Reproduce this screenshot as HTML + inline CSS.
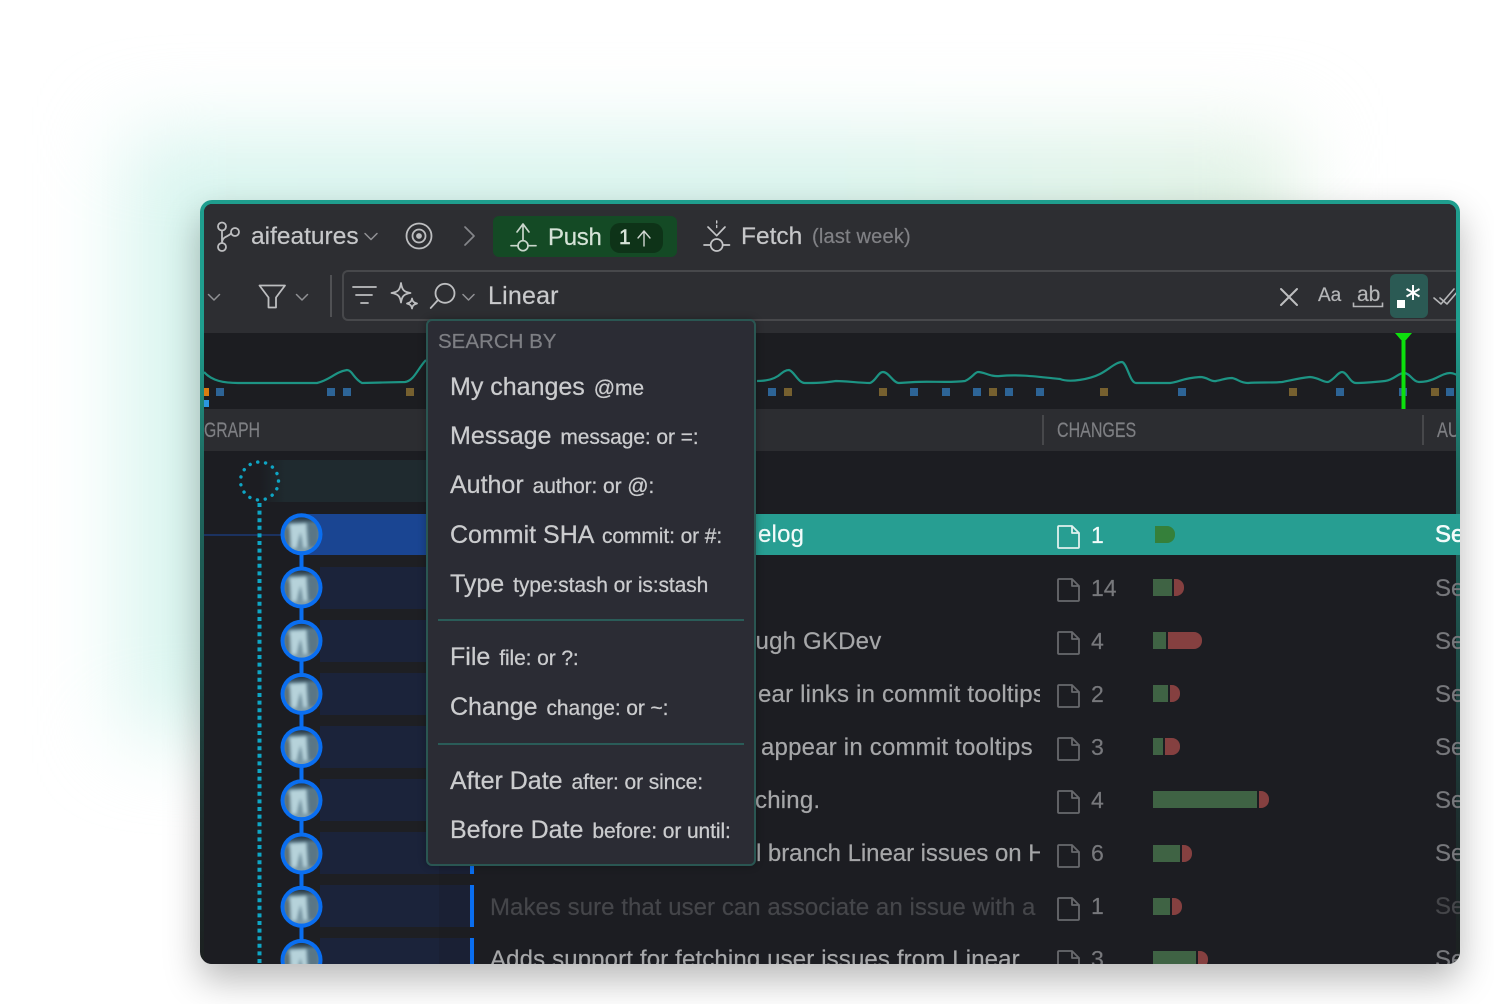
<!DOCTYPE html>
<html><head><meta charset="utf-8"><style>
html,body{margin:0;padding:0;background:#fff}
body{width:1494px;height:1004px;position:relative;overflow:hidden;font-family:"Liberation Sans",sans-serif}
.glow{position:absolute;left:125px;top:135px;width:1170px;height:600px;background:linear-gradient(90deg,#d8f5ef,#d8f3ec 60%,#e0f1e3);filter:blur(42px)}
.win{position:absolute;left:200px;top:200px;width:1260px;height:764px;border-radius:12px;overflow:hidden;background:linear-gradient(180deg,#1f9e8e 0,#1f9e8e 130px,#1f6e64 260px,#1d2f2f 620px,#1c2020 764px);box-shadow:0 16px 36px rgba(0,0,0,.28)}
.wrapb{position:absolute;left:0;top:0;width:1260px;height:764px;filter:blur(.3px)}
.in{position:absolute;left:4px;top:4px;width:1252px;height:760px;background:#1c1d22;border-radius:8px 8px 0 0;overflow:hidden}
.a{position:absolute}
.t{position:absolute;white-space:nowrap;line-height:40px;height:40px;-webkit-text-stroke:.2px}
svg{position:absolute;left:0;top:0;overflow:visible}
.m{font-size:24px;color:#a6a7a9;letter-spacing:.2px}
.n{font-size:23px;color:#77787c}
.s{font-size:24px;color:#77787c;left:1235px}
.g{position:absolute;left:949px;height:17px;background:#3f6344}
.r{position:absolute;height:17px;background:#854040;border-radius:0 8px 8px 0}
.pt{position:absolute;left:23px;white-space:nowrap;line-height:40px;height:40px;font-size:25px;color:#cbccce;-webkit-text-stroke:.25px}
.pt span{font-size:21px;margin-left:2px;letter-spacing:-.1px}
.row{position:absolute;left:116px;width:150px;height:42px;background:#1b233a}
</style></head><body>
<div class="glow"></div>
<div class="win"><div class="wrapb"><div class="in">
<!-- toolbar -->
<div class="a" style="left:0;top:0;width:1252px;height:129px;background:#2d2e32"></div>
<svg width="1252" height="129" fill="none" stroke="#bdbec0" stroke-width="1.8" stroke-linecap="round" stroke-linejoin="round">
<g transform="translate(-204,-204)"><circle cx="222" cy="226.500" r="4"/><circle cx="222" cy="247" r="4"/><circle cx="235" cy="232" r="4"/><path d="M222 230.500V243M231 233.500C228 237 223 236 222 242"/></g>
<path d="M161 29.500l6 6 6-6" stroke="#909194" stroke-width="1.5"/>
<circle cx="215" cy="32" r="12.500"/><circle cx="215" cy="32" r="6.500"/><circle cx="215" cy="32" r="2" fill="#bdbec0"/>
<path d="M261 23l9 9-9 9" stroke="#85868a" stroke-width="1.7"/>
</svg>
<div class="a" style="left:289px;top:12px;width:184px;height:41px;background:#144a25;border-radius:6px"></div>
<div class="a" style="left:406px;top:19px;width:53px;height:30px;background:#0e3318;border-radius:10px"></div>
<svg width="1252" height="129" fill="none" stroke="#c9d6cb" stroke-width="1.7" stroke-linecap="round" stroke-linejoin="round">
<path d="M319 36V20M313 28l6-8 6 8M307 41.700h7M324 41.700h8"/><circle cx="319" cy="41.700" r="5"/>
<path d="M440 42V27M434 34l6-7 6 7" stroke="#d0d6d1" stroke-width="1.4"/>
<g stroke="#c4c5c7"><path d="M512.700 17v9" stroke-dasharray="2 2.500" stroke-width="1.400"/><path d="M504 23l8.700 8.700L521 23"/><circle cx="512.700" cy="41" r="6"/><path d="M500 41h6.500M519 41h6.500"/></g>
</svg>
<div class="t" style="left:47px;top:13px;font-size:24.5px;color:#c6c7c9">aifeatures</div>
<div class="t" style="left:344px;top:14px;font-size:24px;color:#d5e3d7;letter-spacing:-.3px">Push</div>
<div class="t" style="left:415px;top:14px;font-size:21px;color:#d5e3d7;-webkit-text-stroke:.5px">1</div>
<div class="t" style="left:537px;top:13px;font-size:24.5px;color:#c6c7c9">Fetch</div>
<div class="t" style="left:608px;top:13px;font-size:20px;color:#808185;letter-spacing:.2px">(last week)</div>
<!-- search row -->
<div class="a" style="box-sizing:border-box;left:138px;top:66px;width:1120px;height:51px;border:2px solid #47484b;border-right:none;border-radius:6px 0 0 6px"></div>
<div class="a" style="left:126px;top:71px;width:2px;height:42px;background:#505154"></div>
<svg width="1252" height="129" fill="none" stroke="#bdbec0" stroke-width="1.8" stroke-linecap="round" stroke-linejoin="round">
<path d="M4.500 90.500l5.500 5.500 5.500-5.500M92.500 90.500l5.500 5.500 5.500-5.500M259 90.500l5.500 5.500 5.500-5.500" stroke="#909194" stroke-width="1.5"/>
<path d="M55.500 81.500h25.500l-9 12v10h-7.500v-10z"/>
<path d="M149 83h23M152 91h16M157 99h7"/>
<path d="M197 79c1 7 3 9 9.500 10-6.500 1-8.500 3-9.500 9.500-1-6.500-3-8.500-9.500-9.500 6.500-1 8.500-3 9.500-10z"/><path d="M208 94.500c.5 3 1.500 4 5 5-3.500 1-4.500 2-5 5-.5-3-1.500-4-5-5 3.500-1 4.500-2 5-5z"/>
<circle cx="241" cy="89.300" r="9.500"/><path d="M234 96l-7.300 8"/>
<path d="M1077 85l16 16M1093 85l-16 16" stroke-width="2"/>
</svg>
<div class="t" style="left:284px;top:72px;font-size:25px;color:#c9cacc;letter-spacing:.2px">Linear</div>
<div class="t" style="left:1114px;top:72px;font-size:19px;color:#b5b6b8">Aa</div>
<div class="t" style="left:1153px;top:71px;font-size:21px;color:#b5b6b8">ab</div>
<svg width="1252" height="129" fill="none" stroke="#b5b6b8" stroke-width="1.600"><path d="M1149.500 98.500v4h29v-4"/></svg>
<div class="a" style="left:1186px;top:70px;width:38px;height:44px;background:#2b5a54;border-radius:6px"></div>
<div class="a" style="left:1193px;top:96px;width:8px;height:8px;background:#fff"></div>
<svg width="1252" height="129" fill="none" stroke="#fff" stroke-width="2"><path d="M1209 81v15M1202.500 85l13 7.500M1215.500 85l-13 7.500"/></svg>
<svg width="1252" height="129" fill="none" stroke="#b5b6b8" stroke-width="1.600" stroke-linecap="round" stroke-linejoin="round"><path d="M1230 94l7 6 13-15M1236 94l7 6 11-13"/></svg>
<!-- chart -->
<div class="a" style="left:0;top:129px;width:1252px;height:76px;background:#1c1d21"></div>
<svg width="1252" height="210" fill="none">
<g transform="translate(-204,-204)">
<path stroke="#1d9484" stroke-width="2.200" stroke-linejoin="round" d="M204 372C212 381 224 383 238 383L317 383C330 380 335 372 347 370C352 370 354 379 362 383L405 382C414 381 418 368 426 360M757 381C765 381 772 380 778 376C782 373 785 370 789 370C794 371 798 383 805 383C815 383 822 383 836 381C845 381 860 383 870 383C876 381 878 372 883 372C889 372 893 383 899 383L915 382C930 381 950 383 965 381C972 378 975 372 978 372C985 372 990 377 1000 376C1020 374 1040 377 1060 379C1070 383 1090 379 1100 374C1108 370 1116 362 1122 362C1127 363 1130 383 1136 383L1170 383C1180 382 1182 378 1200 377C1208 377 1210 382 1216 381C1222 380 1226 378 1232 378C1238 379 1240 383 1248 383C1258 382 1272 383 1282 382C1292 380 1300 378 1310 377C1320 378 1322 382 1328 382C1334 380 1338 372 1342 372C1347 372 1350 383 1356 383C1365 383 1375 382 1385 381C1394 380 1398 373 1404 373C1410 373 1413 382 1419 382C1426 382 1432 380 1436 378C1442 375 1446 373 1450 373C1453 373 1455 374 1457 375"/>
<path fill="#2d6496" d="M216 388h8v8h-8zM327 388h8v8h-8zM343 388h8v8h-8zM768 388h8v8h-8zM910 388h8v8h-8zM942 388h8v8h-8zM973 388h8v8h-8zM1005 388h8v8h-8zM1036 388h8v8h-8zM1178 388h8v8h-8zM1336 388h8v8h-8zM1399 388h8v8h-8zM1446 388h8v8h-8z"/>
<path fill="#76602f" d="M406 388h8v8h-8zM784 388h8v8h-8zM879 388h8v8h-8zM989 388h8v8h-8zM1100 388h8v8h-8zM1289 388h8v8h-8zM1431 388h8v8h-8z"/>
<path fill="#d87c10" d="M203 388h6v8h-6z"/><path fill="#2b96e0" d="M203 400h6v7h-6z"/>
<path fill="#0de00d" d="M1401.500 333h4v76h-4zM1395 333h17l-6 7h-5z"/>
</g></svg>
<!-- header -->
<div class="a" style="left:0;top:205px;width:1252px;height:42px;background:#2c2d31"></div>
<div class="a" style="left:838px;top:211px;width:2px;height:30px;background:#47484b"></div>
<div class="a" style="left:1218px;top:211px;width:2px;height:30px;background:#47484b"></div>
<div class="t" style="left:0;top:207px;font-size:21px;color:#7e7f83;transform:scaleX(.75);transform-origin:left">GRAPH</div>
<div class="t" style="left:853px;top:207px;font-size:21px;color:#7e7f83;transform:scaleX(.763);transform-origin:left">CHANGES</div>
<div class="t" style="left:1233px;top:207px;font-size:21px;color:#7e7f83;transform:scaleX(.78);transform-origin:left">AU</div>
<!-- graph column -->
<div class="a" style="left:56px;top:256px;width:400px;height:42px;background:linear-gradient(90deg,#1c1d22,#1f2a2f 25px)"></div>
<div class="a" style="left:106px;top:310px;width:160px;height:450px;background:#1e1f23"></div>
<div class="a" style="left:96px;top:310px;width:370px;height:41px;background:#1a4592"></div>
<div class="a" style="left:0;top:330px;width:78px;height:2px;background:#1b3260"></div>
<div class="row" style="top:363px"></div><div class="row" style="top:416px"></div><div class="row" style="top:469px"></div><div class="row" style="top:522px"></div><div class="row" style="top:575px"></div><div class="row" style="top:628px"></div><div class="row" style="top:681px"></div><div class="row" style="top:734px"></div>
<div class="a" style="left:235px;top:363px;width:31px;height:397px;background:rgba(20,20,25,.18)"></div>
<div class="a" style="left:266px;top:628px;width:4px;height:42px;background:#0a6ef0"></div>
<div class="a" style="left:266px;top:681px;width:4px;height:42px;background:#0a6ef0"></div>
<div class="a" style="left:266px;top:734px;width:4px;height:30px;background:#0a6ef0"></div>
<svg width="1252" height="760" fill="none" style="height:760px">
<defs><clipPath id="c"><circle r="17"/></clipPath>
<linearGradient id="av" x1="0" y1="0" x2="0" y2="1"><stop offset="0" stop-color="#25343f"/><stop offset=".22" stop-color="#5f7f8f"/><stop offset="1" stop-color="#7f9ca8"/></linearGradient>
<symbol id="u" overflow="visible"><circle r="21" fill="#0a6ef0"/><g clip-path="url(#c)"><rect x="-17" y="-17" width="34" height="34" fill="url(#av)"/><g style="filter:blur(1.5px)"><path d="M-12-10L5-11 6 13 2 14-1-2-5 14-10 14z" fill="#b6d2da"/><path d="M6-11h11v24H7z" fill="#5a7685"/><path d="M-17-6h5v22h-5z" fill="#5c6f75"/></g></g></symbol></defs>
<circle cx="55.500" cy="277" r="19" stroke="#0ea5c4" stroke-width="3.400" stroke-linecap="round" stroke-dasharray=".1 7.860"/>
<path stroke="#0ea5c4" stroke-width="4" stroke-dasharray="4 3.600" d="M55.500 299V760"/>
<path stroke="#0a6ef0" stroke-width="4" d="M97.500 330V760"/>
<use href="#u" x="97.500" y="330.300"/><use href="#u" x="97.500" y="383.500"/><use href="#u" x="97.500" y="436.700"/><use href="#u" x="97.500" y="489.900"/><use href="#u" x="97.500" y="543.100"/><use href="#u" x="97.500" y="596.300"/><use href="#u" x="97.500" y="649.500"/><use href="#u" x="97.500" y="702.700"/><use href="#u" x="97.500" y="755.900"/></svg>
<!-- rows -->
<div class="a" style="left:470px;top:310px;width:782px;height:41px;background:#279e92"></div>
<div class="t m" style="left:554px;top:311px;color:#f2fbfa">elog</div>
<div class="t m" style="left:538px;top:418px">ough GKDev</div>
<div class="a" style="left:470px;top:471px;width:366px;height:40px;overflow:hidden"><div class="t m" style="left:84px;top:0">ear links in commit tooltips</div></div>
<div class="t m" style="left:557px;top:524px">appear in commit tooltips</div>
<div class="t m" style="left:551px;top:577px">ching.</div>
<div class="a" style="left:470px;top:630px;width:366px;height:40px;overflow:hidden"><div class="t m" style="left:82px;top:0;letter-spacing:-.05px">l branch Linear issues on Hub</div></div>
<div class="a" style="left:286px;top:684px;width:550px;height:40px;overflow:hidden"><div class="t m" style="left:0;top:0;color:#45464a;letter-spacing:.05px">Makes sure that user can associate an issue with a Linear</div></div>
<div class="t m" style="left:286px;top:736px;letter-spacing:.14px">Adds support for fetching user issues from Linear</div>
<!-- file icons -->
<svg width="1252" height="760" style="height:760px" fill="none" stroke="#68696d" stroke-width="1.800" stroke-linejoin="round">
<path stroke="#dff1ee" d="M855 322h13l7 7v14a1 1 0 0 1-1 1h-19a1 1 0 0 1-1-1v-20a1 1 0 0 1 1-1zM868 322v7h7"/>
<path d="M855 375h13l7 7v14a1 1 0 0 1-1 1h-19a1 1 0 0 1-1-1v-20a1 1 0 0 1 1-1zM868 375v7h7"/>
<path d="M855 428h13l7 7v14a1 1 0 0 1-1 1h-19a1 1 0 0 1-1-1v-20a1 1 0 0 1 1-1zM868 428v7h7"/>
<path d="M855 481h13l7 7v14a1 1 0 0 1-1 1h-19a1 1 0 0 1-1-1v-20a1 1 0 0 1 1-1zM868 481v7h7"/>
<path d="M855 534h13l7 7v14a1 1 0 0 1-1 1h-19a1 1 0 0 1-1-1v-20a1 1 0 0 1 1-1zM868 534v7h7"/>
<path d="M855 587h13l7 7v14a1 1 0 0 1-1 1h-19a1 1 0 0 1-1-1v-20a1 1 0 0 1 1-1zM868 587v7h7"/>
<path d="M855 641h13l7 7v14a1 1 0 0 1-1 1h-19a1 1 0 0 1-1-1v-20a1 1 0 0 1 1-1zM868 641v7h7"/>
<path d="M855 694h13l7 7v14a1 1 0 0 1-1 1h-19a1 1 0 0 1-1-1v-20a1 1 0 0 1 1-1zM868 694v7h7"/>
<path d="M855 747h13l7 7v14a1 1 0 0 1-1 1h-19a1 1 0 0 1-1-1v-20a1 1 0 0 1 1-1zM868 747v7h7"/>
</svg>
<div class="t n" style="left:887px;top:311px;color:#f2fbfa">1</div>
<div class="t n" style="left:887px;top:364px">14</div>
<div class="t n" style="left:887px;top:417px">4</div>
<div class="t n" style="left:887px;top:470px">2</div>
<div class="t n" style="left:887px;top:523px">3</div>
<div class="t n" style="left:887px;top:576px">4</div>
<div class="t n" style="left:887px;top:629px">6</div>
<div class="t n" style="left:887px;top:682px">1</div>
<div class="t n" style="left:887px;top:735px">3</div>
<!-- bars -->
<div class="a" style="left:951px;top:322px;width:20px;height:17px;background:#35803a;border-radius:0 8px 8px 0"></div>
<div class="g" style="top:375px;width:19px"></div><div class="r" style="top:375px;left:970px;width:10px"></div>
<div class="g" style="top:428px;width:13px"></div><div class="r" style="top:428px;left:964px;width:34px"></div>
<div class="g" style="top:481px;width:15px"></div><div class="r" style="top:481px;left:966px;width:10px"></div>
<div class="g" style="top:534px;width:10px"></div><div class="r" style="top:534px;left:961px;width:15px"></div>
<div class="g" style="top:587px;width:104px"></div><div class="r" style="top:587px;left:1055px;width:10px"></div>
<div class="g" style="top:641px;width:27px"></div><div class="r" style="top:641px;left:978px;width:10px"></div>
<div class="g" style="top:694px;width:17px"></div><div class="r" style="top:694px;left:968px;width:10px"></div>
<div class="g" style="top:747px;width:43px"></div><div class="r" style="top:747px;left:994px;width:10px"></div>
<!-- popup -->
<div class="a" style="left:222px;top:115px;width:330px;height:547px;box-sizing:border-box;background:#2b2c34;border:2px solid #2a5652;border-radius:6px;box-shadow:0 0 8px rgba(0,0,0,.3)">
<div class="t" style="left:10px;top:1px;font-size:20.5px;color:#7e7f84">SEARCH BY</div>
<div class="pt" style="left:22px;top:46px">My changes <span>@me</span></div>
<div class="pt" style="left:22px;top:95px">Message <span>message: or =:</span></div>
<div class="pt" style="left:22px;top:144px">Author <span>author: or @:</span></div>
<div class="pt" style="left:22px;top:194px">Commit SHA <span>commit: or #:</span></div>
<div class="pt" style="left:22px;top:243px">Type <span>type:stash or is:stash</span></div>
<div class="a" style="left:10px;top:298px;width:306px;height:2px;background:#2a5c58"></div>
<div class="pt" style="left:22px;top:316px">File <span>file: or ?:</span></div>
<div class="pt" style="left:22px;top:366px">Change <span>change: or ~:</span></div>
<div class="a" style="left:10px;top:422px;width:306px;height:2px;background:#2a5c58"></div>
<div class="pt" style="left:22px;top:440px">After Date <span>after: or since:</span></div>
<div class="pt" style="left:22px;top:489px">Before Date <span>before: or until:</span></div>
</div>
</div>
<!-- rows reaching the window edge -->
<div class="a" style="left:1256px;top:314px;width:4px;height:41px;background:#279e92"></div>
<div class="t s" style="top:315px;color:#f2fbfa;-webkit-text-stroke:.6px">Se</div>
<div class="t s" style="top:369px">Se</div><div class="t s" style="top:422px">Se</div><div class="t s" style="top:475px">Se</div><div class="t s" style="top:528px">Se</div><div class="t s" style="top:581px">Se</div><div class="t s" style="top:634px">Se</div><div class="t s" style="top:687px;color:#45464a">Se</div><div class="t s" style="top:740px">Se</div>
</div></div>
</body></html>
